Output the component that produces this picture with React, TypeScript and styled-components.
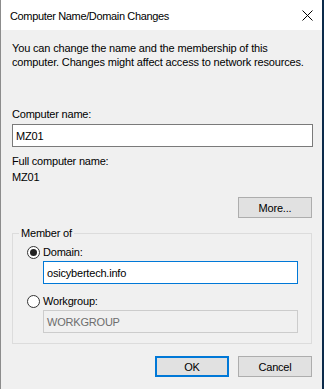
import React from 'react';
import styled, { createGlobalStyle } from 'styled-components';

// --- STYLES ---

const GlobalStyle = createGlobalStyle`
  html, body {
    margin: 0;
    padding: 0;
    background: #0b2a4a;
  }
  body {
    font-family: "Liberation Sans", Arial, sans-serif;
    font-size: 11px;
    letter-spacing: -0.2px;
    color: #000;
  }
`;

const Window = styled.div`
  width: 321px;
  height: 389px;
  border-left: 1px solid #8c8c8c;
  background: #f0f0f0;
  display: flex;
  flex-direction: column;
  overflow: hidden;
`;

const TitleBar = styled.div`
  height: 30px;
  background: #fff;
  display: flex;
  align-items: center;
  justify-content: space-between;
  padding: 0 9px 0 9px;
  flex-shrink: 0;
  letter-spacing: -0.35px;
`;

const Title = styled.span`
  padding-top: 1px;
`;

const CloseButton = styled.span`
  display: flex;
  width: 12px;
  height: 12px;
  align-items: center;
  justify-content: center;
`;

const Body = styled.div`
  flex: 1;
  padding: 11px 9px 0 11px;
  display: flex;
  flex-direction: column;
  white-space: nowrap;
`;

const Description = styled.p`
  margin: 0 0 38px 0;
  line-height: 14px;
  letter-spacing: -0.15px;
`;

const Label = styled.div`
  line-height: 14px;
  margin-bottom: 3px;
`;

const TextBox = styled.div<{ $focused?: boolean; $disabled?: boolean }>`
  height: 23px;
  box-sizing: border-box;
  border: 1px solid ${p => (p.$focused ? '#0078d7' : p.$disabled ? '#cccccc' : '#7a7a7a')};
  background: ${p => (p.$disabled ? '#f0f0f0' : '#fff')};
  color: ${p => (p.$disabled ? '#6d6d6d' : '#000')};
  display: flex;
  align-items: center;
  padding-left: 3px;
`;

const InfoBlock = styled.div`
  margin-top: 6px;
  line-height: 16px;
`;

const MoreRow = styled.div`
  display: flex;
  justify-content: flex-end;
  margin-top: 12px;
  padding-right: 1px;
`;

const Button = styled.div<{ $default?: boolean }>`
  width: 74px;
  height: 21px;
  box-sizing: border-box;
  background: #e1e1e1;
  border: ${p => (p.$default ? '2px solid #0078d7' : '1px solid #adadad')};
  display: flex;
  align-items: center;
  justify-content: center;
`;

const Group = styled.fieldset`
  margin: 8px 1px 0 0;
  padding: 4px 13px 10px 6px;
  border: 1px solid #dcdcdc;
  min-width: 0;
`;

const Legend = styled.legend`
  padding: 0 2px;
  margin-left: 0;
  line-height: 14px;
`;

const GroupContent = styled.div`
  padding-left: 8px;
`;

const RadioRow = styled.div`
  display: flex;
  align-items: center;
  gap: 3px;
  height: 16px;
`;

const RadioCircle = styled.span<{ $checked?: boolean }>`
  width: 13px;
  height: 13px;
  box-sizing: border-box;
  border-radius: 50%;
  border: 1px solid #333;
  background: #fff;
  display: flex;
  align-items: center;
  justify-content: center;

  &::after {
    content: '';
    width: 7px;
    height: 7px;
    border-radius: 50%;
    background: ${p => (p.$checked ? '#222' : 'transparent')};
  }
`;

const Indented = styled.div<{ $top: number; $gap: number }>`
  padding-left: 16px;
  margin-top: ${p => p.$top}px;
  margin-bottom: ${p => p.$gap}px;
`;

const ButtonRow = styled.div`
  display: flex;
  justify-content: flex-end;
  gap: 9px;
  margin-top: 12px;
  padding-right: 1px;
`;

// --- COMPONENT ---

const CloseIcon = () => (
  <svg width="11" height="11" viewBox="0 0 11 11">
    <path d="M0.5 0.5 L10.5 10.5 M10.5 0.5 L0.5 10.5" stroke="#000" strokeWidth="1" fill="none" />
  </svg>
);

const App: React.FC = () => {
  return (
    <>
      <GlobalStyle />
      <Window>
        <TitleBar>
          <Title>Computer Name/Domain Changes</Title>
          <CloseButton>
            <CloseIcon />
          </CloseButton>
        </TitleBar>
        <Body>
          <Description>
            You can change the name and the membership of this
            <br />
            computer. Changes might affect access to network resources.
          </Description>

          <Label>Computer name:</Label>
          <TextBox>MZ01</TextBox>

          <InfoBlock>
            Full computer name:
            <br />
            MZ01
          </InfoBlock>

          <MoreRow>
            <Button>More...</Button>
          </MoreRow>

          <Group>
            <Legend>Member of</Legend>
            <GroupContent>
              <RadioRow>
                <RadioCircle $checked />
                <span>Domain:</span>
              </RadioRow>
              <Indented $top={1} $gap={9}>
                <TextBox $focused>osicybertech.info</TextBox>
              </Indented>
              <RadioRow>
                <RadioCircle />
                <span>Workgroup:</span>
              </RadioRow>
              <Indented $top={1} $gap={0}>
                <TextBox $disabled>WORKGROUP</TextBox>
              </Indented>
            </GroupContent>
          </Group>

          <ButtonRow>
            <Button $default>OK</Button>
            <Button>Cancel</Button>
          </ButtonRow>
        </Body>
      </Window>
    </>
  );
};

export default App;
